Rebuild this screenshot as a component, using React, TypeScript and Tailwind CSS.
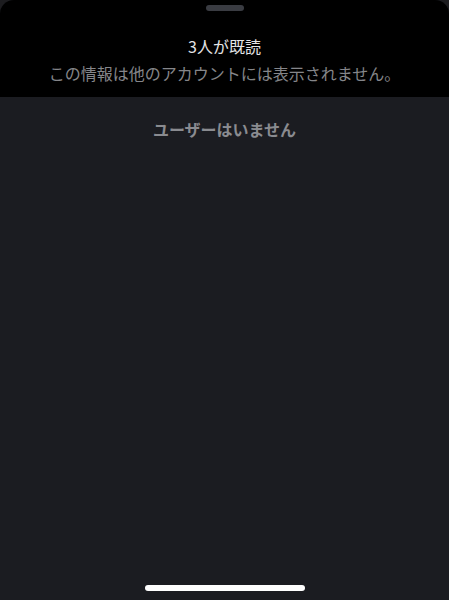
export default function App() {
  const font = { fontFamily: '"Noto Sans CJK JP", "Noto Sans", sans-serif' };
  return (
    <div className="h-[600px] w-[449px] overflow-hidden bg-[#1c1c1f]" style={font}>
      <div className="flex h-full flex-col overflow-hidden rounded-t-[14px] bg-[#1b1c21]">
        <div className="flex h-[97px] flex-col items-center bg-black">
          <div className="mt-[5px] h-[6px] w-[38px] rounded-full bg-[#3a3c42]" />
          <p className="mt-[24px] text-[16px] leading-[22px] text-[#e4e4e6]">3人が既読</p>
          <p className="mt-[5px] text-[16px] leading-[22px] text-[#85868a]">
            この情報は他のアカウントには表示されません。
          </p>
        </div>
        <p className="mt-[21px] text-center text-[16px] font-bold leading-[22px] text-[#8a8b90]">
          ユーザーはいません
        </p>
        <div className="flex-1" />
        <div className="mb-[9px] flex justify-center">
          <div className="h-[6px] w-[160px] rounded-full bg-white" />
        </div>
      </div>
    </div>
  );
}
